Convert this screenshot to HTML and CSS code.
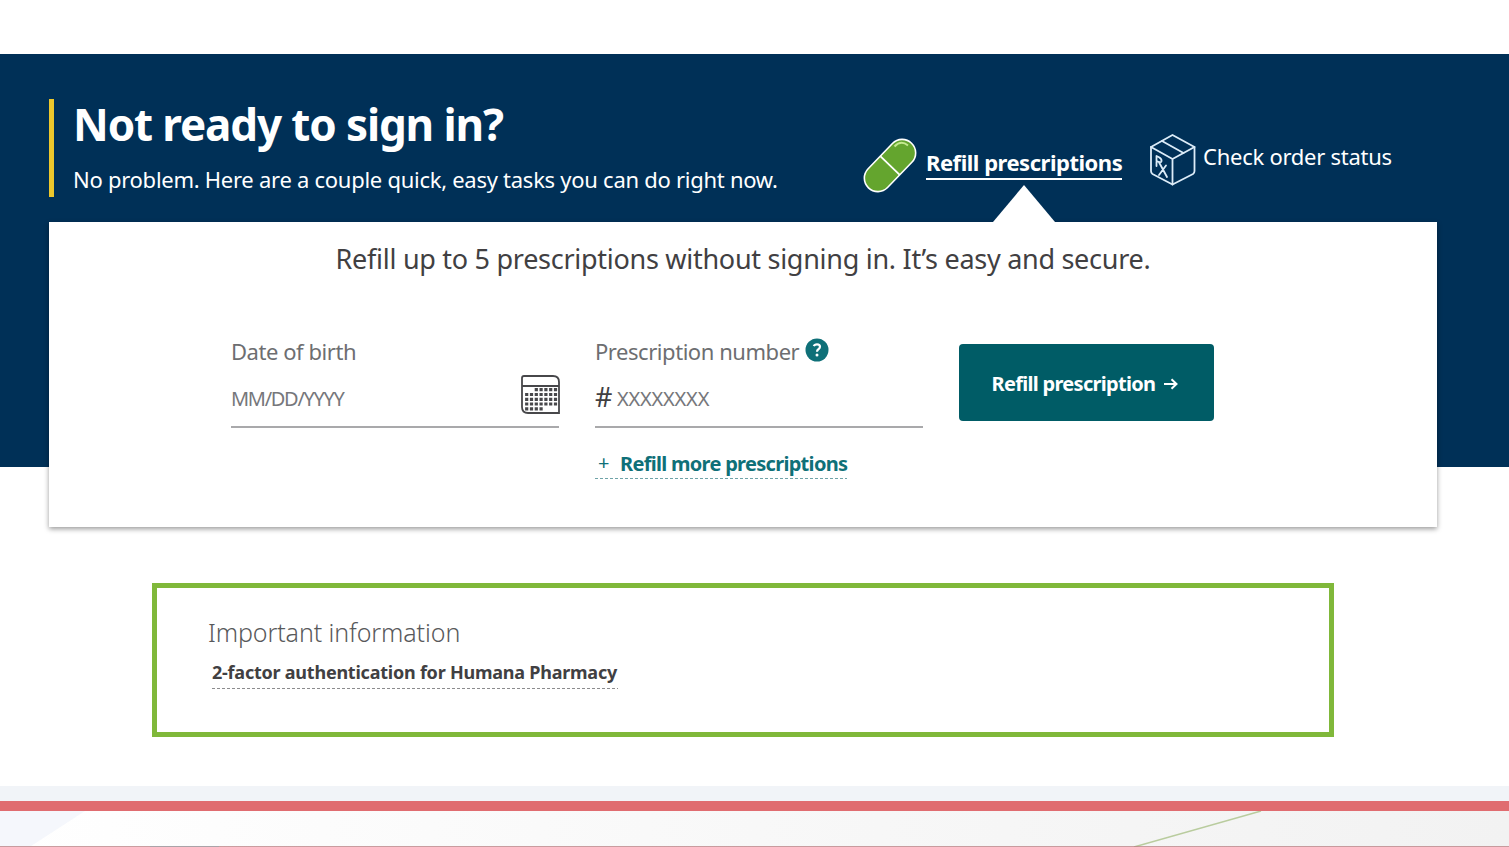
FILE: index.html
```html
<!DOCTYPE html>
<html lang="en">
<head>
    <meta charset="UTF-8">
    <meta name="viewport" content="width=device-width, initial-scale=1.0">
    <title>Humana Pharmacy</title>
    <link rel="stylesheet" href="styles.css">
</head>
<body>

    <!-- Quick tasks -->
    <section class="hero">
        <div class="hero-header">
            <div class="hero-title">
                <h1>Not ready to sign in?</h1>
                <p>No problem. Here are a couple quick, easy tasks you can do right now.</p>
            </div>
            <nav class="tabs">
                <a href="#" class="tab active">
                    <svg class="pill-icon" width="54" height="56" viewBox="0 0 54 56">
                        <g transform="translate(27 27.5) rotate(-46)">
                            <rect x="-31" y="-13.5" width="62" height="27" rx="13.5" fill="#64a52e" stroke="#fff" stroke-width="1.6"/>
                            <path d="M0-13.5V13.5" stroke="#fff" stroke-width="1.8"/>
                        </g>
                        <path d="M31.500 8.500q6.500-7 13.500-1" fill="none" stroke="#c4e88f" stroke-width="2"/>
                    </svg>
                    <span class="tab-text">Refill prescriptions</span>
                </a>
                <a href="#" class="tab">
                    <svg class="box-icon" width="46" height="52" viewBox="0 0 46 52" fill="none" stroke="#dcecf8" stroke-width="1.8" stroke-linejoin="round" stroke-linecap="round">
                        <path d="M22.5 1L44.5 13V37Q44.500 39 43 40L22.5 50.500L2.500 40Q1 39 1 37V13Z"/>
                        <path d="M1 13L22.5 25L44.5 13M22.5 25V50.5"/>
                        <path d="M12 7L33.500 19"/>
                        <path d="M6.500 32V22L9 23.300Q12 25 11.500 27.200Q11 29 6.500 27M9 28.300L17 43M16 31.500L9 41"/>
                    </svg>
                    <span class="tab-text">Check order status</span>
                </a>
            </nav>
        </div>

        <div class="card">
            <h2>Refill up to 5 prescriptions without signing in. It’s easy and secure.</h2>
            <form class="refill-form">
                <div class="field">
                    <label for="dob">Date of birth</label>
                    <div class="input-row">
                        <input type="text" id="dob" placeholder="MM/DD/YYYY">
                        <svg class="calendar-icon" width="39" height="39" viewBox="0 0 39 39" fill="none" stroke="#47474a" stroke-width="1.8">
                            <path d="M1 3Q1 1 3 1H32Q38 1 38 7V38H7Q1 38 1 32ZM1 11H38"/>
                            <path d="M13.700 14.700H36.200M4.100 19.500H36.200M4.100 24.300H36.200M4.100 29H36.200M4.100 33.800H21.800" stroke-width="3.2" stroke-dasharray="3.2 1.6"/>
                        </svg>
                    </div>
                </div>
                <div class="field">
                    <label for="rx">Prescription number
                        <svg class="help-icon" width="24" height="24" viewBox="0 0 24 24" fill="none">
                            <circle cx="12" cy="12" r="11.5" fill="#0f7078"/>
                            <path d="M8.800 8.200Q9.500 6.300 12 6.300Q15 6.300 15 8.800Q15 10.200 13.400 11.300Q12 12.200 12 13.800" stroke="#fff" stroke-width="2.2"/>
                            <circle cx="12" cy="17" r="1.5" fill="#fff"/>
                        </svg>
                    </label>
                    <div class="input-row rx-row">
                        <span class="hash">#</span>
                        <input type="text" id="rx" placeholder="XXXXXXXX">
                    </div>
                    <a href="#" class="more-link"><span class="plus">+</span>Refill more prescriptions</a>
                </div>
                <button type="button" class="refill-btn">
                    Refill prescription
                    <svg width="14" height="12" viewBox="0 0 14 12" fill="none" stroke="#fff" stroke-width="2">
                        <path d="M0 6H12M7.5 1.2L12.5 6L7.5 10.8"/>
                    </svg>
                </button>
            </form>
        </div>
    </section>

    <!-- Important information -->
    <section class="info-box">
        <h3>Important information</h3>
        <a href="#">2-factor authentication for Humana Pharmacy</a>
    </section>

    <!-- Bottom strip -->
    <div class="divider"></div>
    <div class="strip">
        <svg width="1509" height="37" viewBox="0 0 1509 37">
            <path d="M0 0H85L28 37H0Z" fill="#f5f7fc"/>
            <path d="M1134 36L1261 0" stroke="#b9cc9e" stroke-width="1.5"/>
            <path d="M0 36H1509" stroke="#b97c80" stroke-width="1.5"/>
            <path d="M150 36H219" stroke="#aaa3a8" stroke-width="2"/>
        </svg>
    </div>

</body>
</html>
```
FILE: styles.css
```css
* {
    margin: 0;
    padding: 0;
    box-sizing: border-box;
    font-family: "Noto Sans", "Open Sans", sans-serif;
}

:root {
    --navy: #003057;
    --teal: #0f7078;
    --green: #80b83a;
    --text: #414042;
    --text-light: #6d6e71;
}

body {
    background-color: #fff;
    height: 847px;
    overflow: hidden;
    white-space: nowrap;
}

a {
    text-decoration: none;
}

svg {
    display: block;
    flex-shrink: 0;
}

/* Hero */
.hero {
    height: 413px;
    margin-top: 54px;
    padding: 45px 72px 0 49px;
    background-color: var(--navy);
}

.hero-header {
    display: flex;
    justify-content: space-between;
    height: 123px;
    color: #fff;
}

.hero-title {
    height: 98px;
    padding-left: 19px;
    border-left: 5px solid #ecc72c;
}

.hero-title h1 {
    font-size: 44px;
    line-height: 50px;
    letter-spacing: -1.13px;
}

.hero-title p {
    margin-top: 15px;
    font-size: 22px;
    line-height: 30px;
    letter-spacing: -0.27px;
}

/* Tabs */
.tabs {
    display: flex;
    width: 574px;
}

.tab {
    display: flex;
    color: #fff;
    font-size: 22px;
}

.tab.active {
    position: relative;
    width: 287px;
    font-weight: bold;
}

.pill-icon {
    margin-top: 39px;
}

.tab.active .tab-text {
    align-self: flex-start;
    width: 196px;
    height: 34px;
    margin: 47px 0 0 9px;
    line-height: 32px;
    letter-spacing: -0.48px;
    border-bottom: 2px solid #fff;
}

/* Pointer to the card */
.tab.active::after {
    content: "";
    position: absolute;
    left: 130px;
    bottom: 0;
    width: 62px;
    height: 37px;
    background-color: #fff;
    clip-path: polygon(50% 0, 100% 100%, 0 100%);
}

.box-icon {
    margin-top: 35px;
}

.box-icon + .tab-text {
    margin: 42px 0 0 7px;
    line-height: 30px;
    letter-spacing: -0.26px;
}

/* Card */
.card {
    height: 305px;
    padding-top: 18px;
    background-color: #fff;
    box-shadow: 0 2px 5px rgba(0, 0, 0, 0.4);
}

.card h2 {
    color: var(--text);
    font-size: 27px;
    font-weight: normal;
    line-height: 38px;
    letter-spacing: -0.28px;
    text-align: center;
}

.refill-form {
    display: grid;
    grid-template-columns: 328px 328px 255px;
    gap: 36px;
    margin: 59px 0 0 182px;
}

.field label {
    display: flex;
    height: 32px;
    color: var(--text-light);
    font-size: 22px;
    line-height: 29px;
    letter-spacing: -0.45px;
}

.help-icon {
    margin: 1px 0 0 6px;
}

.input-row {
    display: flex;
    justify-content: space-between;
    height: 59px;
    padding-top: 6px;
    border-bottom: 2px solid #a9a9ab;
}

.input-row input {
    width: 230px;
    height: 47px;
    border: none;
    outline: none;
    font-size: 20px;
    letter-spacing: -1.3px;
}

.input-row input::placeholder {
    color: #76777b;
}

.calendar-icon {
    position: relative;
    left: 1px;
}

.rx-row {
    justify-content: flex-start;
}

.rx-row input {
    letter-spacing: -0.2px;
}

.hash {
    width: 22px;
    color: var(--text);
    font-size: 27px;
    line-height: 44px;
}

.more-link {
    display: flex;
    width: 252px;
    height: 31px;
    margin-top: 20px;
    color: var(--teal);
    font-size: 20px;
    font-weight: bold;
    line-height: 31px;
    letter-spacing: -0.7px;
    background: repeating-linear-gradient(to right, #6fa3a8 0 3px, transparent 3px 5px) bottom / 100% 1.5px no-repeat;
}

.plus {
    flex-shrink: 0;
    width: 25px;
    padding-left: 3px;
    font-weight: normal;
    line-height: 29px;
}

.refill-btn {
    display: flex;
    align-items: center;
    justify-content: center;
    gap: 9px;
    height: 77px;
    margin-top: 7px;
    padding: 2px 3px 0 0;
    background-color: #005c66;
    color: #fff;
    border: none;
    border-radius: 4px;
    font-size: 20px;
    font-weight: bold;
    letter-spacing: -0.7px;
    cursor: pointer;
}

/* Important information */
.info-box {
    width: 1182px;
    height: 154px;
    margin: 116px 0 0 152px;
    padding: 26px 51px;
    border: 5px solid var(--green);
}

.info-box h3 {
    color: #58595b;
    font-size: 25px;
    font-weight: 300;
    line-height: 36px;
    letter-spacing: -0.1px;
}

.info-box a {
    display: block;
    width: 406px;
    height: 33px;
    margin: 6px 0 0 4px;
    color: var(--text);
    font-size: 18px;
    font-weight: bold;
    line-height: 33px;
    letter-spacing: -0.23px;
    background: repeating-linear-gradient(to right, #8c8c8e 0 3px, transparent 3px 5px) bottom / 100% 1.5px no-repeat;
}

/* Bottom strip */
.divider {
    height: 25px;
    margin-top: 49px;
    background-color: #f1f4f8;
    border-bottom: 10px solid #e06c70;
}

.strip {
    height: 36px;
    background: linear-gradient(to right, #fff, #f8f8f8 50%, #f2f2f2);
}
```
